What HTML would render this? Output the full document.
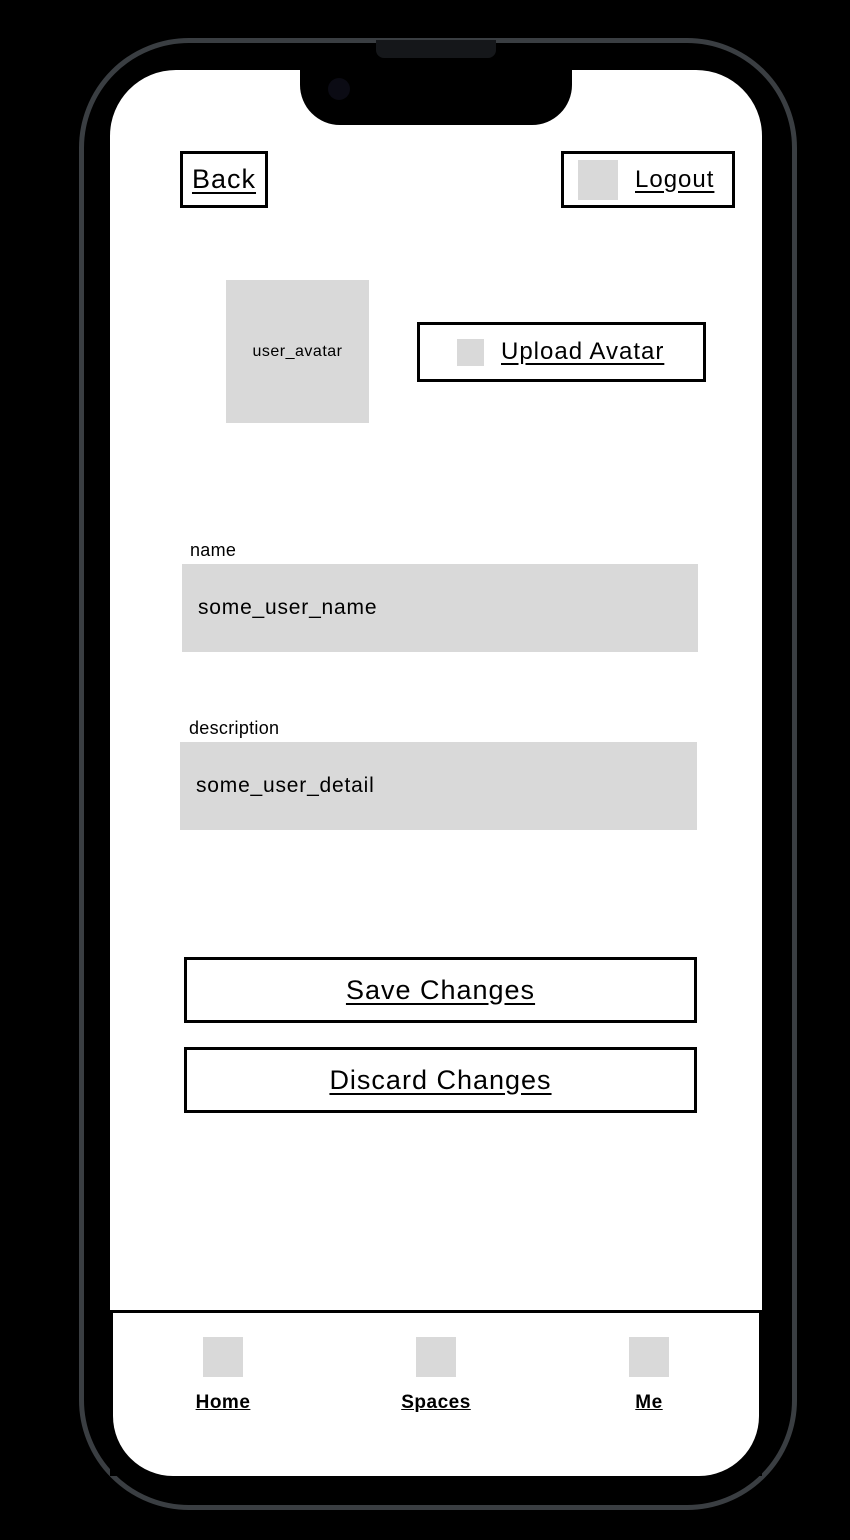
<!DOCTYPE html>
<html><head><style>
*{margin:0;padding:0;box-sizing:border-box}
body{width:850px;height:1540px;background:#000;position:relative;overflow:hidden;font-family:"Liberation Sans",sans-serif;color:#000}
.frame{position:absolute;left:79px;top:38px;width:718px;height:1472px;border:5px solid #3a3e42;border-radius:110px;background:#000}
.screen{position:absolute;left:110px;top:70px;width:652px;height:1406px;background:#fff;border-radius:66px 66px 62px 62px;overflow:hidden}
.notch{position:absolute;left:300px;top:60px;width:272px;height:65px;background:#000;border-radius:0 0 40px 40px}
.cam{position:absolute;left:328px;top:78px;width:22px;height:22px;border-radius:50%;background:#0b0b14}
.spk{position:absolute;left:376px;top:40px;width:120px;height:18px;border-radius:0 0 8px 8px;background:#15171a}
.btn{position:absolute;border:3px solid #000;background:#fff;display:flex;align-items:center;justify-content:center;text-decoration:underline;text-underline-offset:4px;letter-spacing:1px}
.g{background:#d9d9d9;position:absolute}
.lbl{position:absolute;font-size:18px;letter-spacing:.3px}
.field{position:absolute;background:#d9d9d9;font-size:21px;padding-left:16px;display:flex;align-items:center;letter-spacing:.8px}
.nav{position:absolute;left:110px;top:1310px;width:652px;height:166px;background:#000}
.navin{position:absolute;left:3px;top:3px;width:646px;height:163px;background:#fff;border-radius:0 0 60px 60px}
.ni{position:absolute;font-size:19px;font-weight:bold;text-decoration:underline;letter-spacing:.5px;text-align:center;width:100px}
</style></head><body>
<div class="frame"></div>
<div class="screen"></div>
<div class="notch"></div>
<div class="spk"></div>
<div class="cam"></div>

<div class="btn" style="left:180px;top:151px;width:88px;height:57px;font-size:27px">Back</div>
<div class="btn" style="left:561px;top:151px;width:174px;height:57px;font-size:24px;justify-content:flex-start;padding-left:14px"><span style="display:inline-block;width:40px;height:40px;background:#d9d9d9;margin-right:17px"></span>Logout</div>

<div class="g" style="left:226px;top:280px;width:143px;height:143px;display:flex;align-items:center;justify-content:center;font-size:16px;letter-spacing:.5px">user_avatar</div>
<div class="btn" style="left:417px;top:322px;width:289px;height:60px;font-size:24px;justify-content:flex-start;padding-left:37px"><span style="display:inline-block;width:27px;height:27px;background:#d9d9d9;margin-right:17px"></span>Upload Avatar</div>

<div class="lbl" style="left:190px;top:540px">name</div>
<div class="field" style="left:182px;top:564px;width:516px;height:88px">some_user_name</div>
<div class="lbl" style="left:189px;top:718px">description</div>
<div class="field" style="left:180px;top:742px;width:517px;height:88px">some_user_detail</div>

<div class="btn" style="left:184px;top:957px;width:513px;height:66px;font-size:27px">Save Changes</div>
<div class="btn" style="left:184px;top:1047px;width:513px;height:66px;font-size:27px">Discard Changes</div>

<div class="nav"><div class="navin"></div></div>
<div class="g" style="left:203px;top:1337px;width:40px;height:40px"></div>
<div class="g" style="left:416px;top:1337px;width:40px;height:40px"></div>
<div class="g" style="left:629px;top:1337px;width:40px;height:40px"></div>
<div class="ni" style="left:173px;top:1392px">Home</div>
<div class="ni" style="left:386px;top:1392px">Spaces</div>
<div class="ni" style="left:599px;top:1392px">Me</div>
</body></html>
